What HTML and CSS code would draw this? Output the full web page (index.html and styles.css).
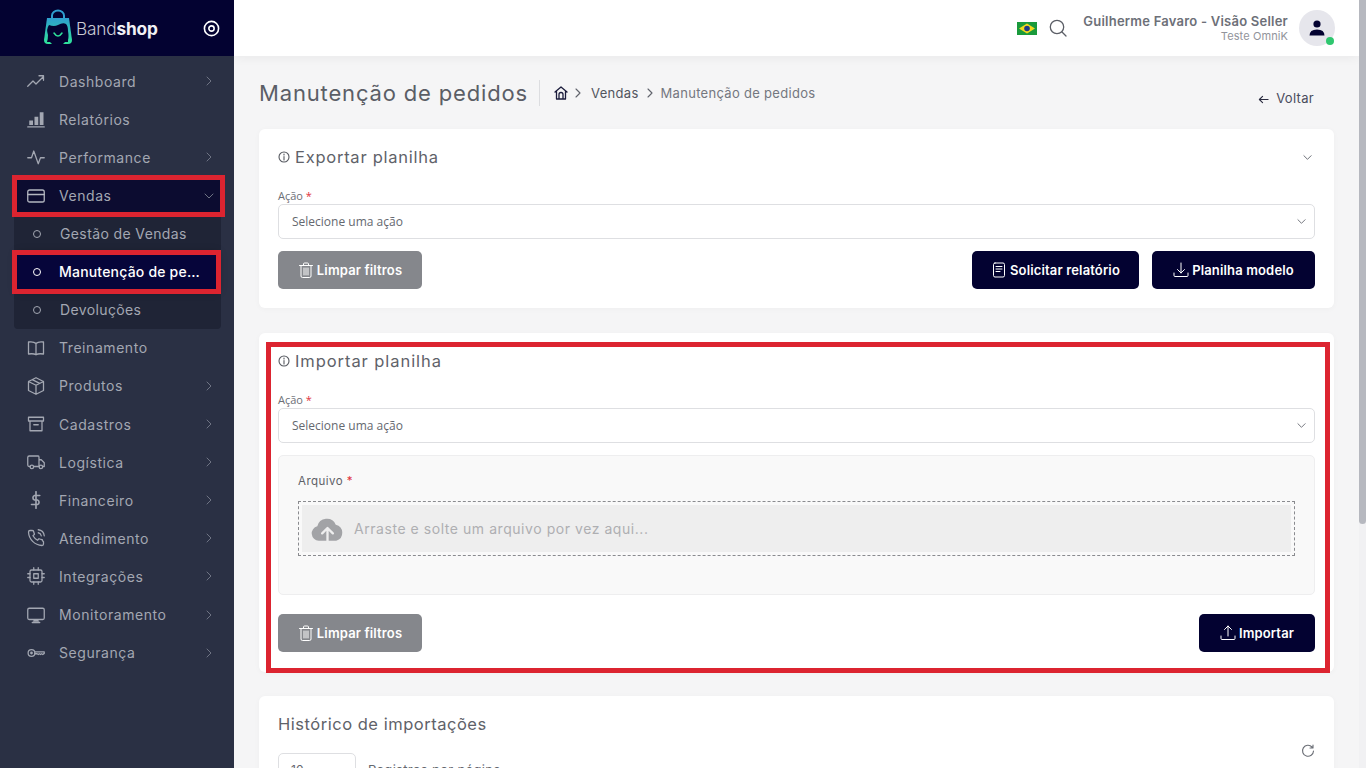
FILE: index.html
```html
<!DOCTYPE html>
<html lang="pt-BR">
<head>
<meta charset="utf-8">
<title>Manutenção de pedidos</title>
<link rel="stylesheet" href="styles.css">
</head>
<body>
<div class="shell">
  <aside class="sidebar">
    <div class="brand">
      <svg class="logo" viewBox="0 0 30 36">
        <defs><linearGradient id="bag" x1="0" y1="0" x2="0" y2="1"><stop offset="0" stop-color="#2f9fd0"/><stop offset="1" stop-color="#2fe39a"/></linearGradient></defs>
        <path class="logo-handle" d="M9 11V6.500a6 5 0 0 1 12 0V11"/>
        <path fill="url(#bag)" d="M4 9h22l3 22q0 4-4 4H5q-4 0-4-4z"/>
        <path fill="#030231" d="M6 16q5 2 9 0 5-3 8-1 2 2 2 7 1 6 0 9v2h-3l-2 2H9l-2-2H4q1-3 1-7-2-6 1-10z"/>
        <path class="logo-smile" d="M11 24q4 6 8 0"/>
      </svg>
      <span class="brand-name">Band<b>shop</b></span>
      <svg class="brand-toggle" viewBox="0 0 18 18"><circle cx="9" cy="9" r="7.500"/><circle class="dot" cx="9" cy="9" r="2.800"/></svg>
    </div>
    <nav class="nav">
      <a class="item"><svg class="ico" viewBox="0 0 24 24"><path d="M1 19l7-7 4 4 10-10M16 5h6v6"/></svg><span>Dashboard</span><svg class="chev" viewBox="0 0 10 10"><path d="M3 1l4 4-4 4"/></svg></a>
      <a class="item"><svg class="ico" viewBox="0 0 24 24"><path class="fill" d="M3 14h5v6H3zM10 9h5v11h-5zM17 3h5v17h-5z"/><path d="M1 22.500h22"/></svg><span>Relatórios</span></a>
      <a class="item"><svg class="ico" viewBox="0 0 24 24"><path d="M1 13h5l3-9 6 17 3-8h5"/></svg><span>Performance</span><svg class="chev" viewBox="0 0 10 10"><path d="M3 1l4 4-4 4"/></svg></a>
      <div class="group">
        <a class="item open"><svg class="ico" viewBox="0 0 24 24"><rect x="1" y="4" width="22" height="16" rx="2.500"/><path d="M1 10h22"/></svg><span>Vendas</span><svg class="chev" viewBox="0 0 10 10"><path d="M1 3l4 4 4-4"/></svg><i class="mark mark-open"></i></a>
        <div class="sub">
          <a class="subitem"><i class="bullet"></i><span>Gestão de Vendas</span></a>
          <a class="subitem current"><i class="bullet"></i><span>Manutenção de pedidos</span><i class="mark mark-current"></i></a>
          <a class="subitem"><i class="bullet"></i><span>Devoluções</span></a>
        </div>
      </div>
      <a class="item"><svg class="ico" viewBox="0 0 24 24"><path d="M12 6Q9 3 2 4v16q7-1 10 1 3-2 10-1V4q-7-1-10 2zM12 6v15"/></svg><span>Treinamento</span></a>
      <a class="item"><svg class="ico" viewBox="0 0 24 24"><path d="M12 1l10 5v12l-10 5-10-5V6zM2 6l10 5 10-5M12 11v12M7 3.500l10 5"/></svg><span>Produtos</span><svg class="chev" viewBox="0 0 10 10"><path d="M3 1l4 4-4 4"/></svg></a>
      <a class="item"><svg class="ico" viewBox="0 0 24 24"><path d="M2 3h20v5H2zM4 8v13h16V8M9 13h6"/></svg><span>Cadastros</span><svg class="chev" viewBox="0 0 10 10"><path d="M3 1l4 4-4 4"/></svg></a>
      <a class="item"><svg class="ico" viewBox="0 0 24 24"><path d="M4 18H3q-2 0-2-2V6q0-2 2-2h12q1 0 1 2v12H9M16 9h3l4 4v5h-2M16 18h0"/><circle cx="6.500" cy="18.500" r="2.300"/><circle cx="18.500" cy="18.500" r="2.300"/></svg><span>Logística</span><svg class="chev" viewBox="0 0 10 10"><path d="M3 1l4 4-4 4"/></svg></a>
      <a class="item"><svg class="ico ico-bold" viewBox="0 0 24 24"><path d="M12 1v22M17 6H10a3.200 3.200 0 0 0 0 6h4a3.200 3.200 0 0 1 0 6H6"/></svg><span>Financeiro</span><svg class="chev" viewBox="0 0 10 10"><path d="M3 1l4 4-4 4"/></svg></a>
      <a class="item"><svg class="ico" viewBox="0 0 24 24"><path d="M15 5a5 5 0 0 1 4 4M15 1a9 9 0 0 1 8 8M22 17v3a2 2 0 0 1-2 2A19 19 0 0 1 2 4a2 2 0 0 1 2-2h3a2 2 0 0 1 2 2l1 3-2 2a16 16 0 0 0 6 6l2-2 3 1a2 2 0 0 1 2 2z"/></svg><span>Atendimento</span><svg class="chev" viewBox="0 0 10 10"><path d="M3 1l4 4-4 4"/></svg></a>
      <a class="item"><svg class="ico" viewBox="0 0 24 24"><rect x="4" y="4" width="16" height="16" rx="2"/><rect x="9" y="9" width="6" height="6"/><path d="M9 1v3M15 1v3M9 20v3M15 20v3M20 9h3M20 14h3M1 9h3M1 14h3"/></svg><span>Integrações</span><svg class="chev" viewBox="0 0 10 10"><path d="M3 1l4 4-4 4"/></svg></a>
      <a class="item"><svg class="ico" viewBox="0 0 24 24"><rect x="1" y="3" width="22" height="15" rx="2"/><path class="fill" d="M9 18h6l1 3H8z"/><path d="M7 22h10"/></svg><span>Monitoramento</span><svg class="chev" viewBox="0 0 10 10"><path d="M3 1l4 4-4 4"/></svg></a>
      <a class="item"><svg class="ico" viewBox="0 0 24 24"><circle cx="6" cy="12" r="4.500"/><circle cx="6" cy="12" r="1"/><path d="M10.500 10.500H23v2l-2 1.500-1.500-1-1.500 1-1.500-1-1.500 1-1.500-1h-3"/></svg><span>Segurança</span><svg class="chev" viewBox="0 0 10 10"><path d="M3 1l4 4-4 4"/></svg></a>
    </nav>
  </aside>

  <div class="main">
    <header class="topbar">
      <svg class="flag" viewBox="0 0 20 13"><rect width="20" height="13" fill="#1a9a3c"/><path d="M10 1.500L18 6.500 10 11.500 2 6.500z" fill="#f4d91e"/><circle cx="10" cy="6.500" r="2.800" fill="#1f3a86"/></svg>
      <svg class="search" viewBox="0 0 18 18"><circle cx="8" cy="8" r="6.700"/><path d="M13 13l4 4"/></svg>
      <div class="user">
        <strong>Guilherme Favaro - Visão Seller</strong>
        <small>Teste OmniK</small>
      </div>
      <div class="avatar">
        <svg viewBox="0 0 18 18"><circle cx="9" cy="5" r="3.600"/><path d="M1.500 16.500q0-6 7.500-6t7.500 6z"/></svg>
        <i class="status"></i>
      </div>
    </header>

    <div class="content">
      <div class="pagehead">
        <h1>Manutenção de pedidos</h1>
        <div class="crumbs">
          <svg class="home" viewBox="0 0 14 14"><path d="M1 6L7 1l6 5M2.500 5v8h9V5M5 13V8.500a2 2 0 0 1 4 0V13"/></svg>
          <svg class="sep" viewBox="0 0 10 10"><path d="M3 1l4 4-4 4"/></svg>
          <a>Vendas</a>
          <svg class="sep" viewBox="0 0 10 10"><path d="M3 1l4 4-4 4"/></svg>
          <span>Manutenção de pedidos</span>
        </div>
        <a class="back"><svg viewBox="0 0 12 12"><path d="M11 6H1.500M5 2.500L1.500 6 5 9.500"/></svg>Voltar</a>
      </div>

      <section class="card">
        <div class="card-title">
          <svg class="info" viewBox="0 0 12 12"><circle cx="6" cy="6" r="5"/><path d="M6 5.500V9M6 3v1"/></svg>
          <h2>Exportar planilha</h2>
          <svg class="collapse" viewBox="0 0 10 10"><path d="M1 3l4 4 4-4"/></svg>
        </div>
        <label class="field-label">Ação <em>*</em></label>
        <div class="select">Selecione uma ação<svg viewBox="0 0 10 10"><path d="M1 3l4 4 4-4"/></svg></div>
        <div class="actions">
          <button class="btn gray"><svg viewBox="0 0 16 16"><path d="M1.500 3.500h13M5.500 3.500V2q0-1 1-1h3q1 0 1 1v1.500M3 3.500V14q0 1.500 1.500 1.500h7Q13 15.500 13 14V3.500M6 6v7M8 6v7M10 6v7"/></svg>Limpar filtros</button>
          <div class="spacer"></div>
          <button class="btn navy btn-report"><svg viewBox="0 0 16 16"><rect x="2.500" y="1" width="11" height="14" rx="1.500"/><path d="M5 4.500h6M5 7h6M5 9.500h4"/></svg>Solicitar relatório</button>
          <button class="btn navy btn-model"><svg viewBox="0 0 16 16"><path d="M8 1v10M4.500 7.500L8 11l3.500-3.500M1 11v2.500q0 1 1 1h12q1 0 1-1V11"/></svg>Planilha modelo</button>
        </div>
      </section>

      <section class="card card-import">
        <div class="card-title">
          <svg class="info" viewBox="0 0 12 12"><circle cx="6" cy="6" r="5"/><path d="M6 5.500V9M6 3v1"/></svg>
          <h2 class="title-wide">Importar planilha</h2>
        </div>
        <label class="field-label">Ação <em>*</em></label>
        <div class="select">Selecione uma ação<svg viewBox="0 0 10 10"><path d="M1 3l4 4 4-4"/></svg></div>
        <div class="panel">
          <label class="file-label">Arquivo <em>*</em></label>
          <div class="drop">
            <div class="drop-inner">
              <svg viewBox="0 0 34 24"><path class="cloud" d="M8 24a7.500 7.500 0 0 1-1.500-14.800A10 10 0 0 1 25.500 7.500 8.500 8.500 0 0 1 26 24z"/><path class="cloud-arrow" d="M17 24v-11M11.500 16.500L17 11l5.500 5.500"/></svg>
              <span>Arraste e solte um arquivo por vez aqui...</span>
            </div>
          </div>
        </div>
        <div class="actions actions-wide">
          <button class="btn gray"><svg viewBox="0 0 16 16"><path d="M1.500 3.500h13M5.500 3.500V2q0-1 1-1h3q1 0 1 1v1.500M3 3.500V14q0 1.500 1.500 1.500h7Q13 15.500 13 14V3.500M6 6v7M8 6v7M10 6v7"/></svg>Limpar filtros</button>
          <div class="spacer"></div>
          <button class="btn navy btn-import"><svg viewBox="0 0 16 16"><path d="M8 11V1M4.500 4.500L8 1l3.500 3.500M1 11v2.500q0 1 1 1h12q1 0 1-1V11"/></svg>Importar</button>
        </div>
        <i class="mark mark-card"></i>
      </section>

      <section class="card card-history">
        <h2 class="history-title">Histórico de importações</h2>
        <div class="history-row">
          <div class="pagesize">10</div>
          <span class="pagesize-label">Registros por página</span>
          <svg class="refresh" viewBox="0 0 14 14"><path d="M12.500 7a5.500 5.500 0 1 1-1.500-4M12 1v3H9"/></svg>
        </div>
      </section>
    </div>
  </div>

  <div class="scrollbar"><div class="thumb"></div></div>
</div>
</body>
</html>
```

FILE: styles.css
```css
* { box-sizing: border-box; }
html, body { margin: 0; height: 100%; overflow: hidden; }
body { font-family: Inter, "Liberation Sans", sans-serif; color: #5b5e66; background: #f5f5f6; }
a { text-decoration: none; color: inherit; }
i, em { font-style: normal; }
svg { display: block; flex: none; fill: none; stroke: currentColor; stroke-linecap: round; stroke-linejoin: round; }

.shell { display: flex; height: 100vh; }

/* Sidebar */
.sidebar { width: 234px; flex: none; background: #2a3044; color: #a3a7b2; }
.brand { height: 56px; background: #030231; display: flex; align-items: center; padding: 0 13px 0 43px; }
.logo { width: 30px; height: 36px; margin-top: -2px; }
.logo path { stroke: none; }
.logo .logo-handle { stroke: #2f9fd0; stroke-width: 2; }
.logo .logo-smile { stroke: #2fe39a; stroke-width: 1.500; }
.brand-name { margin-left: 3px; font-size: 17.300px; letter-spacing: -.2px; color: #c9cad4; font-weight: 300; }
.brand-name b { color: #f1f1f5; font-weight: 700; }
.brand-toggle { width: 17px; height: 17px; margin-left: auto; margin-right: 1px; color: #fff; stroke-width: 1.700; }

.nav { padding-top: 6.200px; }
.item { position: relative; height: 38.100px; margin: 0 13px 0 14px; padding: 0 7px 0 13px; display: flex; align-items: center; font-size: 14px; letter-spacing: .56px; }
.item > span { margin-left: 14px; }
.ico { width: 18px; height: 18px; stroke-width: 1.700; color: #a3a7b2; }
.ico-bold { stroke-width: 2.200; }
.ico .fill { fill: currentColor; stroke: none; }
.chev { width: 10px; height: 10px; margin-left: auto; stroke-width: 1; color: #6f7484; }
.item.open { background: #0c0c30; }
.item.open .ico { color: #b3b6c0; }

.sub { margin: 0 13px 0 14px; background: #1f2436; border-radius: 0 0 4px 4px; }
.subitem { position: relative; height: 38.100px; display: flex; align-items: center; padding: 0 6px 0 19px; font-size: 14px; letter-spacing: .38px; }
.subitem > span { margin-left: 19px; white-space: nowrap; overflow: hidden; text-overflow: ellipsis; }
.bullet { width: 8px; height: 8px; flex: none; border: 1.200px solid currentColor; border-radius: 50%; }
.subitem.current { margin: 0 3px; padding: 0 14px 0 16px; background: #06053a; color: #fff; font-weight: 500; letter-spacing: .2px; box-shadow: 0 0 8px rgba(0,0,0,.35); }
.subitem.current > span { margin-left: 18px; }

/* Annotation frames */
.mark { position: absolute; border: 5px solid #dc2430; pointer-events: none; display: block; }
.mark-open { top: -1px; left: -2px; right: -4px; bottom: -2px; }
.mark-current { top: -3px; left: -5px; right: -3px; bottom: -3px; }
.mark-card { top: 9px; left: 7px; right: 4px; bottom: -1px; }

/* Main */
.main { flex: 1; min-width: 0; height: 100vh; overflow-y: auto; scrollbar-width: none; }
.scrollbar { width: 7px; flex: none; height: 100vh; background: #f1f1f3; }
.thumb { height: 524px; background: #b6b8bf; border-radius: 0 0 4px 4px; }

.topbar { height: 56px; background: #fff; display: flex; align-items: center; padding: 0 24px 0 0; justify-content: flex-end; box-shadow: 0 2px 10px rgba(0,0,0,.05); }
.flag { width: 20px; height: 13px; stroke: none; margin-right: 12px; }
.flag * { stroke: none; }
.search { width: 18px; height: 18px; margin-right: 16px; color: #5b5e66; stroke-width: 1.300; }
.user { display: flex; flex-direction: column; align-items: flex-end; }
.user strong { font-size: 13px; line-height: 17px; font-weight: 600; letter-spacing: .23px; color: #6d7078; }
.user small { font-size: 11px; line-height: 13px; color: #92949b; letter-spacing: .1px; }
.avatar { position: relative; width: 36px; height: 36px; margin-left: 11px; border-radius: 50%; background: #e6e6ec; display: flex; align-items: center; justify-content: center; }
.avatar svg { width: 18px; height: 18px; fill: #030231; stroke: none; }
.status { position: absolute; right: 1px; bottom: 1px; width: 8px; height: 8px; border-radius: 50%; background: #2fc76f; }

.content { padding: 24px 25px 0; }
.pagehead { display: flex; align-items: center; height: 26px; margin-bottom: 23px; }
.pagehead h1 { margin: 0; font-size: 22px; font-weight: 400; letter-spacing: .84px; color: #5b5e66; white-space: nowrap; }
.crumbs { display: flex; align-items: center; height: 26px; margin-left: 11px; padding-left: 14px; border-left: 1px solid #dcdde0; font-size: 13px; letter-spacing: .3px; color: #74777f; }
.crumbs a { color: #52555e; margin: 0 1px 0 8px; }
.home { width: 14px; height: 14px; color: #1b1c3c; stroke-width: 1.300; }
.sep { width: 10px; height: 10px; color: #60636c; stroke-width: 1.100; margin-left: 5px; }
.crumbs span { margin-left: 6px; }
.back { margin-left: auto; margin-right: 20px; align-self: flex-end; display: flex; align-items: center; font-size: 13px; letter-spacing: .3px; color: #4a4c5c; line-height: 16px; }
.back svg { width: 11px; height: 11px; margin-right: 7px; stroke-width: 1.200; color: #2a2b3f; margin-top: 2px; }

.card { position: relative; background: #fff; border-radius: 6px; padding: 19px; margin-bottom: 25px; box-shadow: 0 1px 6px rgba(0,0,0,.03); }
.card-import { padding-bottom: 20px; margin-bottom: 24px; }
.card-title { display: flex; align-items: center; height: 18px; }
.card-title h2 { margin: 0; font-size: 16.500px; line-height: 18px; font-weight: 400; letter-spacing: .75px; color: #5f6269; }
.card-title .title-wide { letter-spacing: .93px; }
.info { width: 12px; height: 12px; margin-right: 5px; stroke-width: 1.100; color: #55585f; }
.collapse { width: 9px; height: 9px; margin-left: auto; color: #6b6e76; stroke-width: 1.100; margin-right: 3px; margin-top: 1px; }

.field-label { display: block; margin-top: 22px; margin-bottom: 1px; height: 15px; line-height: 15px; font-family: "Open Sans", sans-serif; font-size: 11px; color: #6c6f76; }
.field-label em, .file-label em { color: #e0323c; }
.select { height: 35px; display: flex; align-items: center; justify-content: space-between; padding: 0 13px; border: 1px solid #dedfe2; border-radius: 5px; background: #fff; font-family: "Open Sans", sans-serif; font-size: 12px; color: #65686f; }
.select svg { width: 9px; height: 9px; color: #73767d; stroke-width: 1.100; margin-right: -5px; }

.actions { display: flex; margin-top: 12px; gap: 13px; }
.actions-wide { margin-top: 19px; }
.spacer { flex: 1; }
.btn { height: 38px; display: flex; align-items: center; justify-content: center; border: 0; border-radius: 5px; color: #fff; font-family: Inter, "Liberation Sans", sans-serif; font-size: 13px; font-weight: 600; letter-spacing: .15px; }
.btn svg { width: 16px; height: 16px; margin-right: 3px; stroke-width: 1; }
.gray { width: 144px; background: #85878c; }
.navy { background: #030231; }
.btn-report { width: 167px; }
.btn-model { width: 163px; }
.btn-import { width: 116px; }

.panel { margin-top: 12px; height: 140px; padding: 18px 19px 0; background: #f9f9f9; border: 1px solid #eeeeef; border-radius: 5px; }
.file-label { display: block; height: 15px; line-height: 15px; font-size: 11.500px; letter-spacing: .45px; color: #5d6067; }
.drop { margin-top: 12px; height: 55px; padding: 3px; border: 1px dashed #8a8b8f; }
.drop-inner { height: 100%; background: #eeeeee; display: flex; align-items: center; padding-left: 9px; font-size: 14px; letter-spacing: .55px; color: #aeafb2; }
.drop-inner svg { width: 33px; height: 24px; margin-right: 10px; }
.cloud { fill: #a2a3a6; stroke: none; }
.cloud-arrow { stroke: #eeeeee; stroke-width: 2.400; }

.card-history { min-height: 404px; margin-bottom: 25px; }
.history-title { margin: 0; font-size: 16.500px; line-height: 18px; font-weight: 400; letter-spacing: .52px; color: #5f6269; }
.history-row { display: flex; align-items: flex-start; margin-top: 11px; }
.pagesize { width: 78px; height: 36px; margin-top: 9px; padding: 8px 12px; border: 1px solid #dedfe2; border-radius: 5px; font-size: 12px; color: #65686f; }
.pagesize-label { margin: 18px 0 0 12px; font-size: 13px; letter-spacing: .3px; color: #65686f; }
.refresh { width: 14px; height: 14px; margin-left: auto; color: #6b6e76; stroke-width: 1.100; }
```
